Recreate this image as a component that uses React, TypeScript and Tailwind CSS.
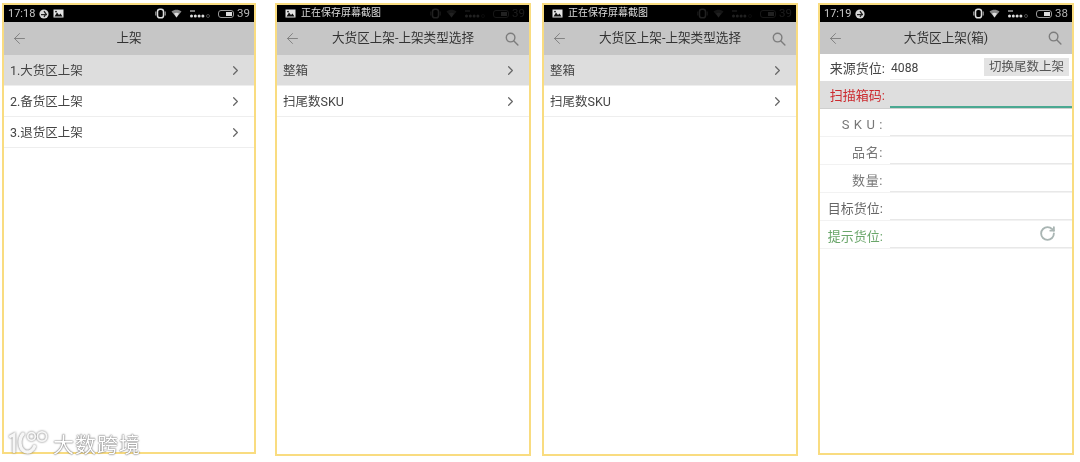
import React from "react";
import { ArrowLeft, ChevronRight, RotateCw } from "lucide-react";

const FONT = "font-['Roboto','Noto_Sans_CJK_SC',sans-serif]";

const ImageIcon = () => (
  <svg width="11" height="9" viewBox="0 0 11 9" className="shrink-0">
    <rect x="0.5" y="0.5" width="10" height="8" fill="#e5e5e5" />
    <path d="M1.5 7.5L4 3.5l2 2.5 1.5-1.5 2 3z" fill="#111" />
    <circle cx="3" cy="2.6" r="0.9" fill="#111" />
  </svg>
);

const AppDot = () => (
  <svg width="10" height="10" viewBox="0 0 10 10" className="shrink-0">
    <circle cx="5" cy="5" r="4.6" fill="#d8d8d8" />
    <path d="M2 5.6h6M5 2.2L7 5 5 8" stroke="#222" strokeWidth="1.3" fill="none" />
  </svg>
);

const SearchIcon = () => (
  <svg width="14" height="14" viewBox="0 0 14 14" fill="none" stroke="#7d7d7d" strokeWidth="1.4" strokeLinecap="round">
    <circle cx="5.6" cy="5.6" r="4.3" />
    <path d="M8.9 8.9l4 4" />
  </svg>
);

const SysIcons = ({ battery, dim }: { battery: string; dim?: boolean }) => (
  <div className={`ml-auto flex items-center gap-[5px] ${dim ? "opacity-15" : ""}`}>
    <svg width="11" height="11" viewBox="0 0 11 11">
      <rect x="2.5" y="1.2" width="6" height="8.6" rx="2.4" fill="none" stroke="#ddd" strokeWidth="1.5" />
      <path d="M0.8 3.5v4M10.2 3.5v4" stroke="#bbb" strokeWidth="1" />
    </svg>
    <svg width="11" height="9" viewBox="0 0 11 9">
      <path d="M0.5 2.6C3.5 0 7.5 0 10.5 2.6L5.5 8.5z" fill="#8a8a8a" />
      <path d="M3 4.4c1.5-1 3.5-1 5 0L5.5 8.5z" fill="#ddd" />
    </svg>
    <svg width="23" height="9" viewBox="0 0 23 9" className="ml-[3px]">
      <rect x="0" y="1" width="5" height="2" fill="#777" />
      <circle cx="1.5" cy="7" r="1.5" fill="#ddd" />
      <circle cx="5.3" cy="7" r="1.5" fill="#ddd" />
      <circle cx="9.1" cy="7" r="1.5" fill="#ddd" />
      <circle cx="12.9" cy="7" r="1.5" fill="#ddd" />
      <circle cx="18" cy="7" r="1.5" fill="none" stroke="#777" strokeWidth="0.6" />
    </svg>
    <div className="flex h-[8px] w-[16px] justify-end rounded-[3px] border border-[#999] p-px">
      <div className="w-[6px] bg-[#ddd]" />
    </div>
    <span className="-ml-[2px] text-[11.5px] leading-none text-[#b5b5b5]">{battery}</span>
  </div>
);

const StatusBar = ({ time, extraImage }: { time: string; extraImage?: boolean }) => (
  <div className="flex h-[17px] shrink-0 items-center gap-[4px] bg-black pl-[4px] pr-[4px]">
    <span className="text-[11px] leading-none text-[#c8c8c8]">{time}</span>
    <AppDot />
    {extraImage && <ImageIcon />}
    <SysIcons battery={time === "17:18" ? "39" : "38"} />
  </div>
);

const SavingBar = () => (
  <div className="flex h-[17px] shrink-0 items-center gap-[5px] bg-black pl-[8px] pr-[4px]">
    <ImageIcon />
    <span className="pb-[2px] text-[10px] leading-none text-[#dcdcdc]">正在保存屏幕截图</span>
    <SysIcons battery="39" dim />
  </div>
);

const Header = ({ title, search = true, short }: { title: string; search?: boolean; short?: boolean }) => (
  <div
    className={`flex shrink-0 items-center justify-between bg-[#c6c6c6] pl-[7px] pr-[10px] ${
      short ? "h-[32px]" : "h-[33px]"
    }`}
  >
    <ArrowLeft size={17} strokeWidth={1.3} className="text-[#7d7d7d]" />
    <span className="text-[12.6px] leading-none text-[#333]">{title}</span>
    {search ? <SearchIcon /> : <div className="w-[14px]" />}
  </div>
);

const MenuRow = ({ label, active }: { label: string; active?: boolean }) => (
  <div
    className={`flex h-[31px] items-center justify-between border-b border-[#eeeeee] pl-[6px] pr-[11px] text-[12.5px] text-[#444] ${
      active ? "bg-[#dddddd]" : "bg-white"
    }`}
  >
    <span className="pt-[2px]">{label}</span>
    <ChevronRight size={15} strokeWidth={1.9} className="text-[#666]" />
  </div>
);

const LABEL = "shrink-0 self-center text-right text-[13px] leading-none";

const FormRow = ({
  label,
  labelClass = "text-[#555]",
  children,
}: {
  label: string;
  labelClass?: string;
  children?: React.ReactNode;
}) => (
  <div className="flex h-[28px] items-start border-b border-[#f2f2f2]">
    <span className={`${LABEL} w-[63px] pt-[4px] ${labelClass}`}>{label}</span>
    <div className="ml-[7px] flex h-[27px] flex-1 items-center border-b border-[#e8e8e8]">{children}</div>
  </div>
);

const Phone = ({ className, children }: { className: string; children: React.ReactNode }) => (
  <div className={`flex flex-col overflow-hidden border-2 border-[#f9dc80] bg-white ${className}`}>{children}</div>
);

const ListPhone = ({ className }: { className: string }) => (
  <Phone className={className}>
    <SavingBar />
    <Header title="大货区上架-上架类型选择" />
    <MenuRow label="整箱" active />
    <MenuRow label="扫尾数SKU" />
  </Phone>
);

const Watermark = () => (
  <div className="absolute left-[9px] top-[428px] flex items-center gap-[4px]">
    <svg width="40" height="28" viewBox="0 0 40 28" fill="none" className="drop-shadow-[0_0_1px_#6f6f6f]">
      <g stroke="#f6f6f6" strokeLinecap="round">
        <path d="M1.5 8.5l3.5-2v17" strokeWidth="3" />
        <path d="M14 6c-4.5 5-4 15 2 17.5 4 1.5 8-.5 9.5-5" strokeWidth="3.4" />
        <circle cx="22.5" cy="8.5" r="3.8" strokeWidth="1.8" />
        <circle cx="33" cy="8.5" r="4.6" strokeWidth="1.8" />
      </g>
    </svg>
    <span className="mt-[7px] text-[21px] leading-none tracking-[1px] text-white [text-shadow:0_0_1px_#555,0_0_2px_#777]">
      大数跨境
    </span>
  </div>
);

export default function App() {
  return (
    <div className={`relative flex h-[462px] w-[1080px] items-start overflow-hidden bg-white pl-[2px] pt-[3px] blur-[0.4px] ${FONT}`}>
      <Phone className="h-[451px] w-[254px]">
        <StatusBar time="17:18" extraImage />
        <Header title="上架" search={false} />
        <MenuRow label="1.大货区上架" active />
        <MenuRow label="2.备货区上架" />
        <MenuRow label="3.退货区上架" />
      </Phone>

      <ListPhone className="ml-[19px] h-[453px] w-[256px]" />
      <ListPhone className="ml-[11px] h-[453px] w-[256px]" />

      <Phone className="ml-[20px] h-[452px] w-[256px]">
        <StatusBar time="17:19" />
        <Header title="大货区上架(箱)" short />
        <div className="flex h-[27px] items-center bg-white">
          <span className={`${LABEL} w-[65px] pt-[2px] text-[#444]`}>来源货位:</span>
          <div className="ml-[5px] flex h-[24px] flex-1 items-center justify-between border-b border-[#eeeeee] pr-[3px] pl-px">
            <span className="pt-[2px] text-[12.2px] text-[#444]">4088</span>
            <span className="flex h-[18px] items-center bg-[#e3e3e3] px-[5px] text-[12.5px] text-[#555]">切换尾数上架</span>
          </div>
        </div>
        <div className="flex h-[28px] items-start border-b border-[#cfcfcf] bg-[#dedede]">
          <span className={`${LABEL} w-[65px] pt-[2px] text-[#cc2b2f]`}>扫描箱码:</span>
          <div className="ml-[5px] h-[27px] flex-1 border-b-2 border-[#4aa891]" />
        </div>
        <FormRow label="S K U :" labelClass="text-[#777] tracking-[0.6px]" />
        <FormRow label="品名:" labelClass="text-[#777] tracking-[0.6px]" />
        <FormRow label="数量:" labelClass="text-[#777] tracking-[0.6px]" />
        <FormRow label="目标货位:" labelClass="text-[#666]" />
        <FormRow label="提示货位:" labelClass="text-[#6aa66a]">
          <RotateCw size={17} strokeWidth={2.6} className="ml-auto mr-[16px] -mt-[2px] text-[#a9b5b3]" />
        </FormRow>
      </Phone>

      <Watermark />
    </div>
  );
}
